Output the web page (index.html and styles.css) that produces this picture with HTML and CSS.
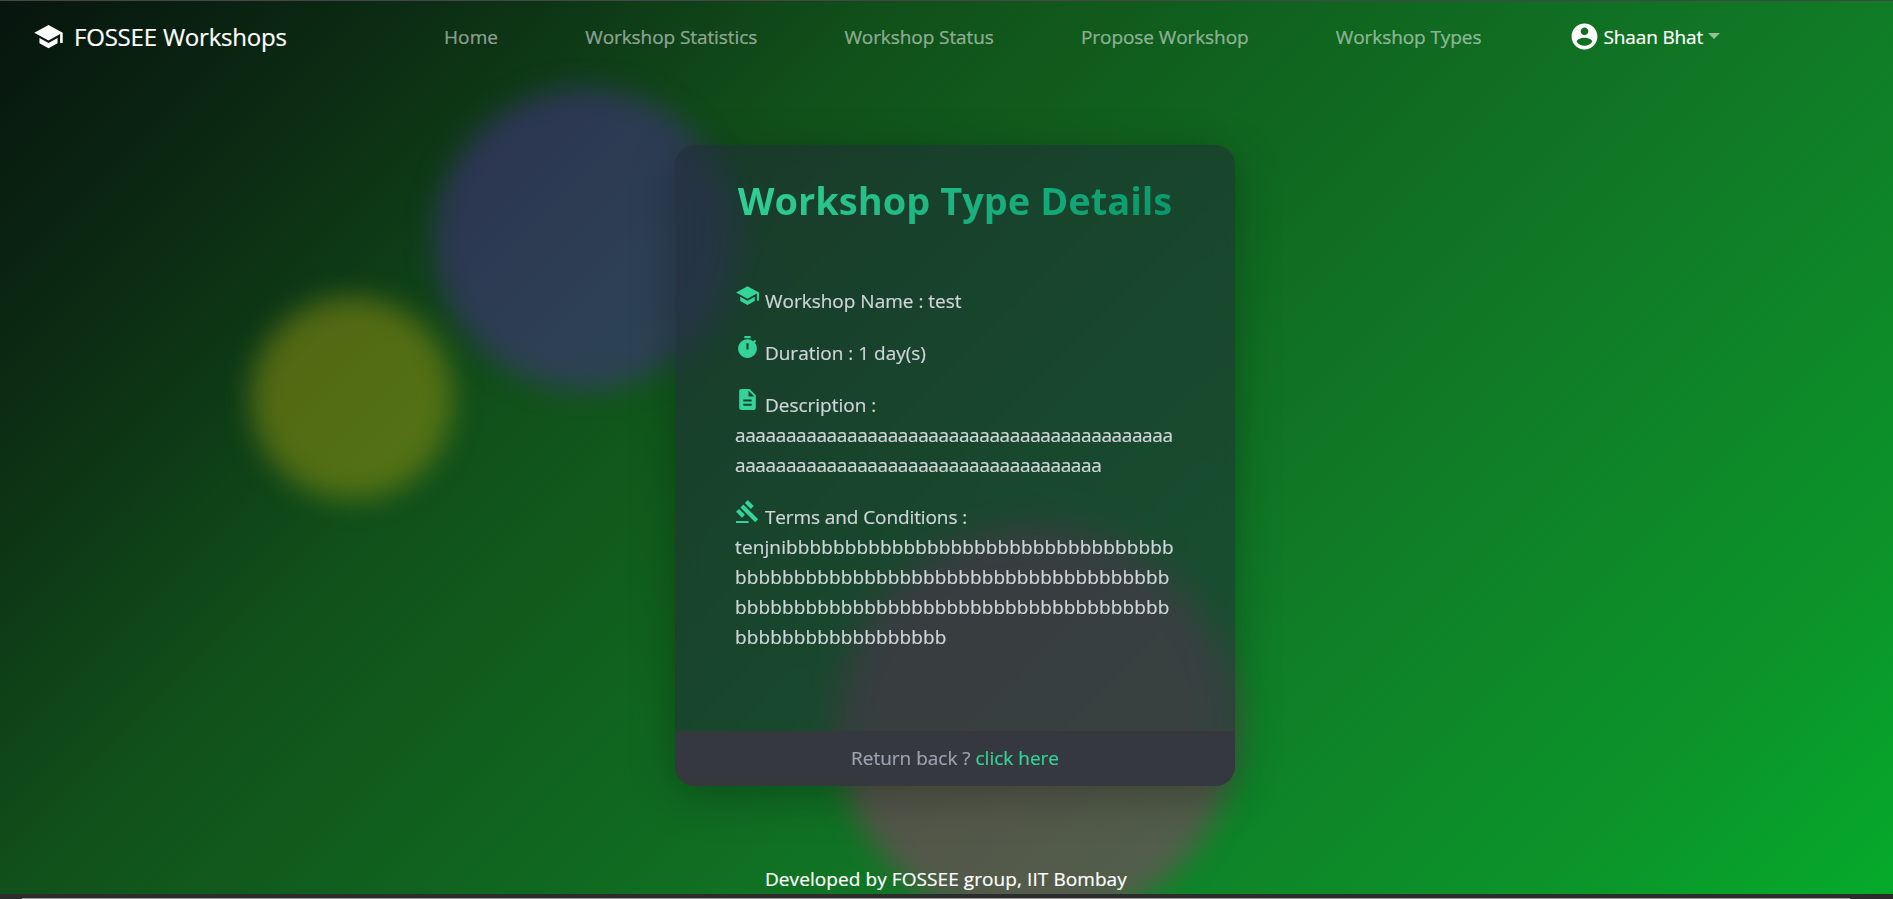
FILE: index.html
```html
<!DOCTYPE html>
<html lang="en">
<head>
<meta charset="utf-8">
<title>FOSSEE Workshops</title>
<link rel="stylesheet" href="styles.css">
</head>
<body>
<div class="page">
  <div class="blob blob-indigo"></div>
  <div class="blob blob-yellow"></div>
  <div class="blob blob-rose"></div>

  <nav class="navbar">
    <a class="brand">
      <svg class="brand-icon" viewBox="0 0 24 24"><path d="M5 13.180v4L12 21l7-3.820v-4L12 17l-7-3.820zM12 3 1 9l11 6 9-4.910V17h2V9L12 3z"/></svg>
      <span>FOSSEE Workshops</span>
    </a>
    <div class="links">
      <a class="link-home">Home</a>
      <a>Workshop Statistics</a>
      <a>Workshop Status</a>
      <a>Propose Workshop</a>
      <a>Workshop Types</a>
    </div>
    <a class="user">
      <svg class="user-icon" viewBox="0 0 24 24"><path d="M12 2C6.480 2 2 6.480 2 12s4.480 10 10 10 10-4.480 10-10S17.520 2 12 2zm0 3c1.660 0 3 1.340 3 3s-1.340 3-3 3-3-1.340-3-3 1.340-3 3-3zm0 14.200c-2.500 0-4.710-1.280-6-3.220.030-1.990 4-3.080 6-3.080 1.990 0 5.970 1.090 6 3.080-1.290 1.940-3.500 3.220-6 3.220z"/></svg>
      <span>Shaan Bhat</span>
      <i class="caret"></i>
    </a>
  </nav>

  <main class="card">
    <h1 class="title">Workshop Type Details</h1>
    <div class="details">
      <p><svg viewBox="0 0 24 24"><path d="M5 13.180v4L12 21l7-3.820v-4L12 17l-7-3.820zM12 3 1 9l11 6 9-4.910V17h2V9L12 3z"/></svg> Workshop Name : test</p>
      <p><svg viewBox="0 0 24 24"><path d="M9 1h6v2H9zM19.030 7.390l1.420-1.420c-.430-.510-.900-.990-1.410-1.410l-1.420 1.420A8.962 8.962 0 0 0 12 4c-4.970 0-9 4.030-9 9s4.020 9 9 9 9-4.030 9-9c0-2.120-.740-4.070-1.970-5.610zM13 14h-2V8h2v6z"/></svg> Duration : 1 day(s)</p>
      <p><svg viewBox="0 0 24 24"><path d="M14 2H6c-1.100 0-1.990.900-1.990 2L4 20c0 1.100.890 2 1.990 2H18c1.100 0 2-.900 2-2V8l-6-6zm2 16H8v-2h8v2zm0-4H8v-2h8v2zm-3-5V3.500L18.500 9H13z"/></svg> Description :<br><span class="run-a">aaaaaaaaaaaaaaaaaaaaaaaaaaaaaaaaaaaaaaaaaaa<br>aaaaaaaaaaaaaaaaaaaaaaaaaaaaaaaaaaaa</span></p>
      <p><svg viewBox="0 0 24 24"><path d="M1 21h12v2H1zM5.245 8.070l2.830-2.827 14.140 14.142-2.828 2.828zM12.317 1l5.657 5.656-2.830 2.830-5.654-5.660zM3.825 9.485l5.657 5.657-2.828 2.828-5.657-5.657z"/></svg> <span class="terms">Terms and Conditions :</span><br><span class="run-b">tenjnibbbbbbbbbbbbbbbbbbbbbbbbbbbbbbbbb<br>bbbbbbbbbbbbbbbbbbbbbbbbbbbbbbbbbbbbb<br>bbbbbbbbbbbbbbbbbbbbbbbbbbbbbbbbbbbbb<br>bbbbbbbbbbbbbbbbbb</span></p>
    </div>
    <div class="card-footer">Return back ? <a>click here</a></div>
  </main>

  <footer class="credits">Developed by FOSSEE group, IIT Bombay</footer>
  <div class="bottom-bar"><div class="bottom-line"></div></div>
</div>
</body>
</html>
```
FILE: styles.css
```css
* { box-sizing: border-box; }
html, body { margin: 0; height: 100%; overflow: hidden; }
body { font: 400 19px/30px "Open Sans", "Noto Sans", sans-serif; color: #fff; }

.page {
  position: relative;
  display: flex;
  flex-direction: column;
  height: 899px;
  overflow: hidden;
  border-top: 1px solid #46454a;
  -webkit-text-stroke: .2px;
  background: linear-gradient(135deg, #07150e 0%, #0a2411 10%, #0d3615 20%, #11501a 32%, #10621e 46%, #107c27 68%, #0b952a 88%, #05ab2a 100%);
}

.blob { position: absolute; border-radius: 50%; filter: blur(14px); }
.blob-indigo { left: 434px; top: 87px; width: 302px; height: 302px; background: rgba(74, 48, 142, .5); }
.blob-yellow { left: 251px; top: 296px; width: 202px; height: 202px; background: rgba(149, 149, 16, .5); }
.blob-rose { left: 836px; top: 525px; width: 400px; height: 400px; background: rgba(149, 58, 110, .5); }

.navbar {
  position: relative;
  display: flex;
  flex-shrink: 0;
  align-items: center;
  height: 72px;
  padding-left: 33px;
  white-space: nowrap;
}
.brand { display: flex; align-items: center; gap: 10px; width: 411px; font-size: 24px; letter-spacing: -.2px; }
.brand-icon { width: 31px; height: 31px; fill: #fff; margin-top: -1px; }
.links { display: flex; gap: 87.2px; letter-spacing: -.08px; color: rgba(255, 255, 255, .5); }
.link-home { width: 54px; letter-spacing: .1px; }
.user { display: flex; align-items: center; margin-left: 87.2px; letter-spacing: -.15px; }
.user-icon { width: 31px; height: 31px; fill: #fff; margin: -1px 4px 0 0; }
.caret { margin: -2px 0 0 5px; border: 6px solid transparent; border-top-color: rgba(255, 255, 255, .55); border-bottom: 0; }

.card {
  position: relative;
  display: flex;
  flex-direction: column;
  flex-shrink: 0;
  width: 560px;
  height: 641px;
  margin: 72px 0 0 675px;
  border-radius: 20px;
  overflow: hidden;
  background: rgba(33, 42, 56, .53);
  backdrop-filter: blur(12px);
  box-shadow: 0 10px 45px rgba(0, 0, 0, .27);
}
.title {
  align-self: center;
  margin: 25px 0 0;
  font-size: 38px;
  line-height: 60px;
  font-weight: 700;
  white-space: nowrap;
  color: transparent;
  -webkit-text-stroke: 0;
  background: linear-gradient(135deg, #34d399, #059669);
  -webkit-background-clip: text;
  background-clip: text;
}
.details { flex: 1; padding: 56px 60px 0; color: #d1d5db; white-space: nowrap; }
.details p { margin: 0 0 22px; }
.details svg { width: 25px; height: 25px; margin-top: -10px; fill: #34d399; vertical-align: baseline; }
.terms { letter-spacing: -.1px; }
.run-a { letter-spacing: -.38px; }
.run-b { letter-spacing: .12px; }
.card-footer {
  height: 55px;
  line-height: 54px;
  text-align: center;
  color: #9ca3af;
  background: #363840;
}
.card-footer a { color: #34d399; }

.credits { position: relative; flex-shrink: 0; margin-top: 78px; padding-left: 765px; letter-spacing: .08px; white-space: nowrap; }
.bottom-bar { position: relative; flex-shrink: 0; height: 5px; margin-top: auto; padding: 4px 43px 0 22px; background: #2b2c2b; }
.bottom-line { height: 1px; background: #979797; }
```
